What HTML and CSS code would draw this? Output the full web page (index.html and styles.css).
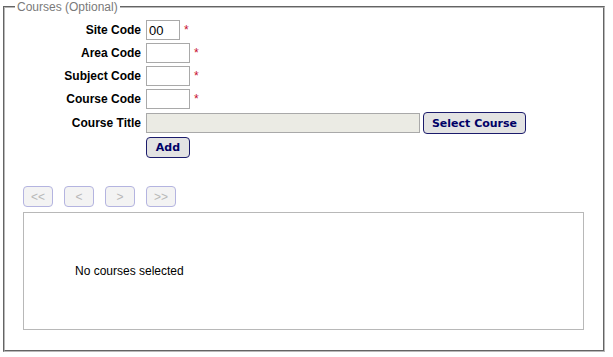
FILE: index.html
```html
<!DOCTYPE html>
<html>
<head>
    <title>Courses</title>
    <link rel="stylesheet" href="styles.css">
</head>
<body>
    <div class="panel">
        <fieldset class="courses">
            <legend>Courses (Optional)</legend>

            <div class="entry">
                <label for="site">Site Code</label>
                <div class="field">
                    <input type="text" id="site" class="code-sm" value="00">
                    <span class="req">*</span>
                </div>

                <label for="area">Area Code</label>
                <div class="field">
                    <input type="text" id="area" class="code">
                    <span class="req">*</span>
                </div>

                <label for="subject">Subject Code</label>
                <div class="field">
                    <input type="text" id="subject" class="code">
                    <span class="req">*</span>
                </div>

                <label for="course">Course Code</label>
                <div class="field">
                    <input type="text" id="course" class="code">
                    <span class="req">*</span>
                </div>

                <label for="title">Course Title</label>
                <div class="field">
                    <input type="text" id="title" class="title" disabled>
                    <button class="btn btn-select">Select Course</button>
                </div>

                <span></span>
                <div class="field">
                    <button class="btn btn-add">Add</button>
                </div>
            </div>

            <div class="pager">
                <button class="nav" disabled>&lt;&lt;</button>
                <button class="nav" disabled>&lt;</button>
                <button class="nav" disabled>&gt;</button>
                <button class="nav" disabled>&gt;&gt;</button>
            </div>

            <div class="results">No courses selected</div>
        </fieldset>
    </div>
</body>
</html>
```

FILE: styles.css
```css
body {
    margin: 0;
    font-family: 'Liberation Sans', Arial, sans-serif;
    font-size: 12px;
    color: #000;
    background: #fff;
}
.panel {
    width: 602px;
    margin-left: 3px;
}
.courses {
    margin: 0;
    padding: 6px 11px 20px 10px;
    border: 2px groove #b8b8b8;
    min-width: 0;
}
.courses legend {
    padding: 0 2px;
    line-height: 14px;
    color: #7a7a7a;
}
.entry {
    display: grid;
    grid-template-columns: 126px auto;
    column-gap: 5px;
    row-gap: 3px;
    align-items: center;
}
.entry label {
    text-align: right;
    font-weight: bold;
}
.field {
    display: flex;
    align-items: center;
}
input {
    box-sizing: border-box;
    height: 20px;
    margin: 0;
    padding: 0 2px;
    border: 1px solid #a9a9a9;
    font-family: 'Liberation Sans', Arial, sans-serif;
    font-size: 13px;
    color: #000;
    background: #fff;
}
.code-sm {
    width: 34px;
}
.code {
    width: 44px;
}
.title {
    width: 274px;
    background: #ebebe4;
}
.req {
    margin-left: 4px;
    color: #c8102e;
    font-size: 12px;
}
.btn {
    box-sizing: border-box;
    margin: 0;
    padding: 0;
    border: 1px solid #1c1c6c;
    border-radius: 4px;
    background: #e3e3e3;
    color: #000066;
    font-family: 'DejaVu Sans', Verdana, sans-serif;
    font-size: 11px;
    font-weight: bold;
    cursor: pointer;
}
.btn-select {
    width: 103px;
    height: 22px;
    margin-left: 3px;
}
.btn-add {
    width: 44px;
    height: 21px;
}
.pager {
    display: flex;
    gap: 11px;
    margin: 28px 0 5px 8px;
}
.nav {
    box-sizing: border-box;
    width: 30px;
    height: 21px;
    margin: 0;
    padding: 0;
    border: 1px solid #b4b4e0;
    border-radius: 4px;
    background: #f3f3f3;
    color: #b8b8b8;
    font-family: 'Liberation Sans', Arial, sans-serif;
    font-size: 12px;
}
.results {
    box-sizing: border-box;
    height: 118px;
    margin: 0 8px;
    padding-left: 51px;
    border: 1px solid #b8b8b8;
    display: flex;
    align-items: center;
}
```
